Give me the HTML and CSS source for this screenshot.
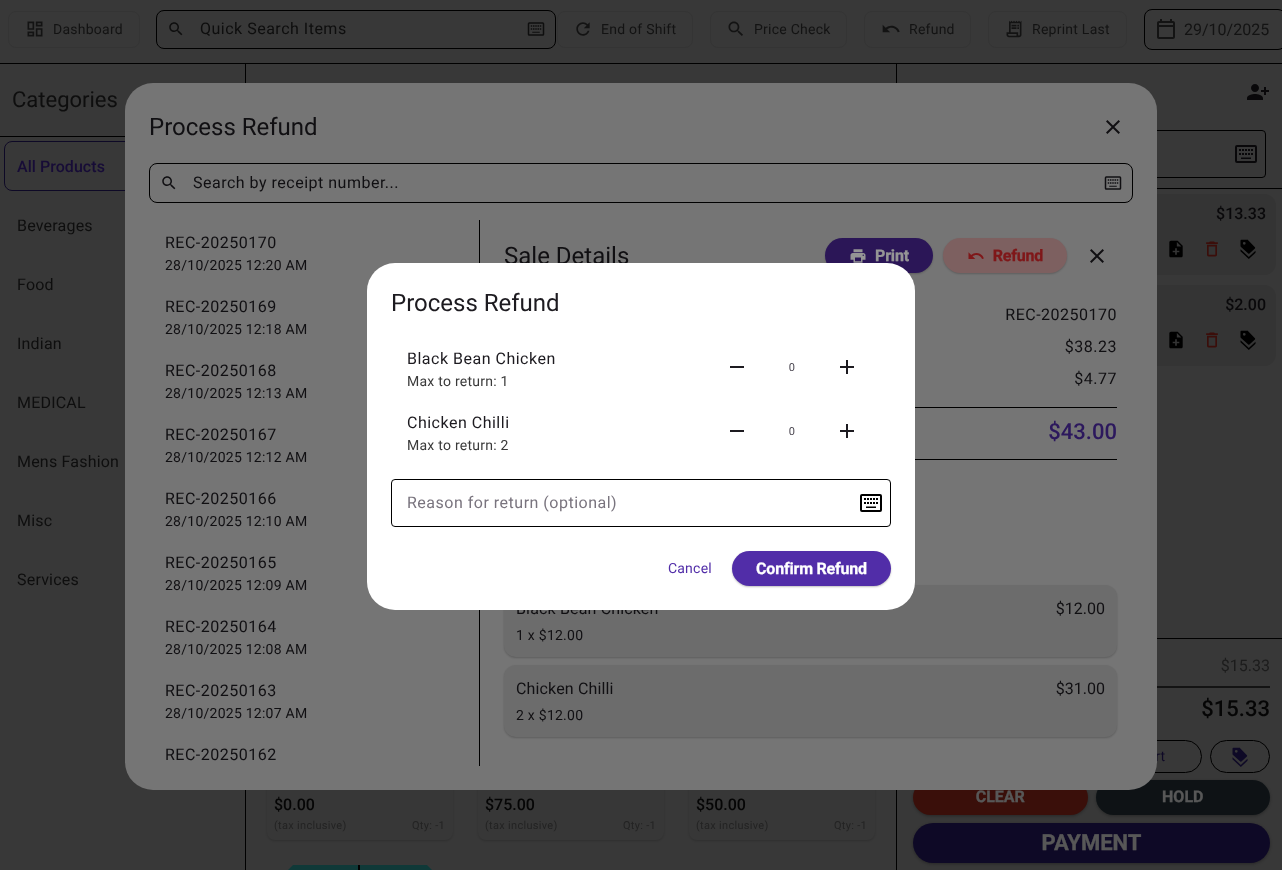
FILE: index.html
```html
<!DOCTYPE html>
<html lang="en">
    <head>
        <meta charset="UTF-8">
        <meta name="viewport" content="width=device-width, initial-scale=1.0">
        <title>Process Refund</title>
        <link rel="stylesheet" href="styles.css">
    </head>
    <body>
        <svg class="icon-defs" width="0" height="0">
            <symbol id="i-search" viewBox="0 0 24 24"><path d="M15.5 14h-.79l-.28-.27C15.41 12.59 16 11.11 16 9.5 16 5.91 13.09 3 9.5 3S3 5.91 3 9.5 5.91 16 9.5 16c1.61 0 3.09-.59 4.23-1.57l.27.28v.79l5 4.99L20.49 19l-4.99-5zm-6 0C7.01 14 5 11.99 5 9.5S7.01 5 9.5 5 14 7.01 14 9.5 11.99 14 9.5 14z"/></symbol>
            <symbol id="i-close" viewBox="0 0 24 24"><path d="M19 6.41 17.59 5 12 10.59 6.41 5 5 6.41 10.59 12 5 17.59 6.41 19 12 13.41 17.59 19 19 17.59 13.41 12z"/></symbol>
            <symbol id="i-keyboard" viewBox="0 0 24 24"><path fill-rule="evenodd" d="M3 3h18a2 2 0 0 1 2 2v14a2 2 0 0 1-2 2H3a2 2 0 0 1-2-2V5a2 2 0 0 1 2-2zm0 2v14h18V5z"/><path d="M5 7h2v2H5zm3 0h2v2H8zm3 0h2v2h-2zm3 0h2v2h-2zm3 0h2v2h-2zM5 11h2v2H5zm3 0h2v2H8zm3 0h2v2h-2zm3 0h2v2h-2zm3 0h2v2h-2zM7 15.500h10V17H7z"/></symbol>
            <symbol id="i-dashboard" viewBox="0 0 24 24"><path d="M19 5v2h-4V5h4M9 5v6H5V5h4m10 8v6h-4v-6h4M9 17v2H5v-2h4M21 3h-8v6h8V3zM11 3H3v10h8V3zm10 8h-8v10h8V11zm-10 4H3v6h8v-6z"/></symbol>
            <symbol id="i-refresh" viewBox="0 0 24 24"><path d="M17.65 6.35C16.2 4.9 14.21 4 12 4c-4.42 0-7.99 3.58-7.99 8s3.57 8 7.99 8c3.73 0 6.84-2.55 7.73-6h-2.08c-.82 2.33-3.04 4-5.65 4-3.31 0-6-2.69-6-6s2.69-6 6-6c1.66 0 3.14.69 4.22 1.78L13 11h7V4l-2.35 2.35z"/></symbol>
            <symbol id="i-undo" viewBox="0 0 24 24"><path d="M12.5 8c-2.65 0-5.05.99-6.9 2.6L2 7v9h9l-3.62-3.62c1.39-1.16 3.16-1.88 5.12-1.88 3.54 0 6.55 2.31 7.6 5.5l2.37-.78C21.08 11.03 17.15 8 12.5 8z"/></symbol>
            <symbol id="i-receipt" viewBox="0 0 24 24"><path d="M19.5 3.5 18 2l-1.5 1.5L15 2l-1.5 1.5L12 2l-1.5 1.5L9 2 7.5 3.5 6 2v14H3v3c0 1.66 1.34 3 3 3h12c1.66 0 3-1.34 3-3V2l-1.5 1.5zM15 20H6c-.55 0-1-.45-1-1v-1h10v2zm4-1c0 .55-.45 1-1 1s-1-.45-1-1v-3H8V5h11v14z"/><path d="M9 7h6v2H9zm7 0h2v2h-2zm-7 3h6v2H9zm7 0h2v2h-2z"/></symbol>
            <symbol id="i-calendar" viewBox="0 0 24 24"><path d="M19 4h-1V2h-2v2H8V2H6v2H5c-1.11 0-1.99.9-1.99 2L3 20c0 1.1.89 2 2 2h14c1.1 0 2-.9 2-2V6c0-1.1-.9-2-2-2zm0 16H5V10h14v10zM5 8V6h14v2H5z"/></symbol>
            <symbol id="i-person-add" viewBox="0 0 24 24"><path transform="matrix(-1 0 0 1 24 0)" d="M15 12c2.21 0 4-1.79 4-4s-1.79-4-4-4-4 1.79-4 4 1.79 4 4 4zm-9-2V7H4v3H1v2h3v3h2v-3h3v-2H6zm9 4c-2.67 0-8 1.34-8 4v2h16v-2c0-2.66-5.33-4-8-4z"/></symbol>
            <symbol id="i-note-add" viewBox="0 0 24 24"><path d="M14 2H6c-1.1 0-1.99.9-1.99 2L4 20c0 1.1.89 2 2 2h12c1.1 0 2-.9 2-2V8l-6-6zm2 14h-3v3h-2v-3H8v-2h3v-3h2v3h3v2zm-3-7V3.5L18.5 9H13z"/></symbol>
            <symbol id="i-delete" viewBox="0 0 24 24"><path d="M6 19c0 1.1.9 2 2 2h8c1.1 0 2-.9 2-2V7H6v12zM8 9h8v10H8V9zm7.5-5-1-1h-5l-1 1H5v2h14V4z"/></symbol>
            <symbol id="i-tags" viewBox="0 0 24 24"><path fill-rule="evenodd" d="M4 1c-.6 0-1 .4-1 1v6.500c0 .3.100.5.300.700l9 8.300c.4.400 1 .400 1.400 0l6.600-6.100c.4-.400.400-1 0-1.400l-9-9.300C11.100 1.100 10.800 1 10.500 1zm3.500 2.500a1.700 1.700 0 1 1 0 3.400 1.700 1.700 0 0 1 0-3.400z"/><path d="M3 12.200l10 9.300 8-7.400v2.500l-8 7.400-10-9.300z"/></symbol>
            <symbol id="i-print" viewBox="0 0 24 24"><path d="M19 8H5c-1.660 0-3 1.340-3 3v6h4v4h12v-4h4v-6c0-1.660-1.340-3-3-3zm-3 11H8v-5h8v5zm3-7c-.55 0-1-.45-1-1s.45-1 1-1 1 .45 1 1-.45 1-1 1zm-1-9H6v4h12V3z"/></symbol>
            <symbol id="i-minus" viewBox="0 0 24 24"><path d="M19 13H5v-2h14v2z"/></symbol>
            <symbol id="i-plus" viewBox="0 0 24 24"><path d="M19 13h-6v6h-2v-6H5v-2h6V5h2v6h6v2z"/></symbol>
        </svg>

        <div class="app">
            <header class="topbar">
                <button class="top-btn btn-dashboard"><svg class="icon"><use href="#i-dashboard"/></svg>Dashboard</button>
                <div class="quick-search">
                    <svg class="icon-sm"><use href="#i-search"/></svg>
                    <span class="quick-search-text">Quick Search Items</span>
                    <svg class="icon-sm"><use href="#i-keyboard"/></svg>
                </div>
                <button class="top-btn btn-shift"><svg class="icon"><use href="#i-refresh"/></svg>End of Shift</button>
                <button class="top-btn btn-price"><svg class="icon"><use href="#i-search"/></svg>Price Check</button>
                <button class="top-btn btn-refund"><svg class="icon"><use href="#i-undo"/></svg>Refund</button>
                <button class="top-btn btn-reprint"><svg class="icon"><use href="#i-receipt"/></svg>Reprint Last</button>
                <div class="date-box"><svg class="icon"><use href="#i-calendar"/></svg>29/10/2025</div>
            </header>

            <div class="main">
                <aside class="sidebar">
                    <h2 class="sidebar-title">Categories</h2>
                    <div class="cat cat-active">All Products</div>
                    <div class="cat">Beverages</div>
                    <div class="cat">Food</div>
                    <div class="cat">Indian</div>
                    <div class="cat">MEDICAL</div>
                    <div class="cat">Mens Fashion</div>
                    <div class="cat">Misc</div>
                    <div class="cat">Services</div>
                </aside>

                <section class="products">
                    <div class="product-grid">
                        <div class="product">
                            <div class="product-price">$0.00</div>
                            <div class="product-meta"><span>(tax inclusive)</span><span>Qty: -1</span></div>
                        </div>
                        <div class="product">
                            <div class="product-price">$75.00</div>
                            <div class="product-meta"><span>(tax inclusive)</span><span>Qty: -1</span></div>
                        </div>
                        <div class="product">
                            <div class="product-price">$50.00</div>
                            <div class="product-meta"><span>(tax inclusive)</span><span>Qty: -1</span></div>
                        </div>
                    </div>
                    <div class="product-thumb"></div>
                </section>

                <aside class="cart">
                    <div class="cart-head"><svg class="icon"><use href="#i-person-add"/></svg></div>
                    <div class="cart-customer"><div class="cart-field"><svg class="icon"><use href="#i-keyboard"/></svg></div></div>
                    <div class="cart-lines">
                        <div class="cart-line">
                            <div class="cart-line-price">$13.33</div>
                            <div class="cart-line-icons">
                                <svg class="icon"><use href="#i-note-add"/></svg>
                                <svg class="icon icon-red"><use href="#i-delete"/></svg>
                                <svg class="icon"><use href="#i-tags"/></svg>
                            </div>
                        </div>
                        <div class="cart-line">
                            <div class="cart-line-price">$2.00</div>
                            <div class="cart-line-icons">
                                <svg class="icon"><use href="#i-note-add"/></svg>
                                <svg class="icon icon-red"><use href="#i-delete"/></svg>
                                <svg class="icon"><use href="#i-tags"/></svg>
                            </div>
                        </div>
                    </div>
                    <div class="cart-foot">
                        <div class="cart-sub">$15.33</div>
                        <div class="cart-total">$15.33</div>
                        <div class="cart-row cart-row-outline">
                            <div class="pill-outline pill-wide"><span>rt</span></div>
                            <div class="pill-outline pill-tag"><svg class="icon-tag"><use href="#i-tags"/></svg></div>
                        </div>
                        <div class="cart-row cart-row-actions">
                            <button class="act act-clear">CLEAR</button>
                            <button class="act act-hold">HOLD</button>
                        </div>
                        <button class="act-pay">PAYMENT</button>
                    </div>
                </aside>
            </div>
        </div>

        <!-- first dialog -->
        <div class="scrim">
            <div class="dialog dialog-sales">
                <div class="dialog-head">
                    <h2 class="dialog-title">Process Refund</h2>
                    <svg class="icon icon-close"><use href="#i-close"/></svg>
                </div>
                <div class="receipt-search">
                    <svg class="icon-sm"><use href="#i-search"/></svg>
                    <span class="receipt-search-text">Search by receipt number...</span>
                    <svg class="icon-sm"><use href="#i-keyboard"/></svg>
                </div>
                <div class="sales-body">
                    <div class="receipts">
                        <div class="receipt"><div class="receipt-no">REC-20250170</div><div class="receipt-date">28/10/2025 12:20 AM</div></div>
                        <div class="receipt"><div class="receipt-no">REC-20250169</div><div class="receipt-date">28/10/2025 12:18 AM</div></div>
                        <div class="receipt"><div class="receipt-no">REC-20250168</div><div class="receipt-date">28/10/2025 12:13 AM</div></div>
                        <div class="receipt"><div class="receipt-no">REC-20250167</div><div class="receipt-date">28/10/2025 12:12 AM</div></div>
                        <div class="receipt"><div class="receipt-no">REC-20250166</div><div class="receipt-date">28/10/2025 12:10 AM</div></div>
                        <div class="receipt"><div class="receipt-no">REC-20250165</div><div class="receipt-date">28/10/2025 12:09 AM</div></div>
                        <div class="receipt"><div class="receipt-no">REC-20250164</div><div class="receipt-date">28/10/2025 12:08 AM</div></div>
                        <div class="receipt"><div class="receipt-no">REC-20250163</div><div class="receipt-date">28/10/2025 12:07 AM</div></div>
                        <div class="receipt"><div class="receipt-no">REC-20250162</div></div>
                    </div>
                    <div class="sale">
                        <div class="sale-head">
                            <h3 class="sale-title">Sale Details</h3>
                            <button class="sale-btn sale-print"><svg class="icon-sm"><use href="#i-print"/></svg>Print</button>
                            <button class="sale-btn sale-refund"><svg class="icon-sm"><use href="#i-undo"/></svg>Refund</button>
                            <svg class="icon sale-close"><use href="#i-close"/></svg>
                        </div>
                        <div class="sale-values">
                            <div>REC-20250170</div>
                            <div>$38.23</div>
                            <div>$4.77</div>
                        </div>
                        <div class="sale-total">$43.00</div>
                        <div class="sale-item">
                            <div class="sale-item-top"><span>Black Bean Chicken</span><span class="sale-item-price">$12.00</span></div>
                            <div class="sale-item-sub">1 x $12.00</div>
                        </div>
                        <div class="sale-item">
                            <div class="sale-item-top"><span>Chicken Chilli</span><span class="sale-item-price">$31.00</span></div>
                            <div class="sale-item-sub">2 x $12.00</div>
                        </div>
                    </div>
                </div>
            </div>
        </div>

        <!-- second dialog, on top -->
        <div class="scrim">
            <div class="dialog dialog-confirm">
                <h2 class="dialog-title confirm-title">Process Refund</h2>
                <div class="return-row">
                    <div class="return-text">
                        <div class="return-name">Black Bean Chicken</div>
                        <div class="return-max">Max to return: 1</div>
                    </div>
                    <div class="stepper">
                        <svg class="icon"><use href="#i-minus"/></svg>
                        <span class="stepper-val">0</span>
                        <svg class="icon"><use href="#i-plus"/></svg>
                    </div>
                </div>
                <div class="return-row">
                    <div class="return-text">
                        <div class="return-name">Chicken Chilli</div>
                        <div class="return-max">Max to return: 2</div>
                    </div>
                    <div class="stepper">
                        <svg class="icon"><use href="#i-minus"/></svg>
                        <span class="stepper-val">0</span>
                        <svg class="icon"><use href="#i-plus"/></svg>
                    </div>
                </div>
                <div class="reason">
                    <span class="reason-text">Reason for return (optional)</span>
                    <svg class="icon"><use href="#i-keyboard"/></svg>
                </div>
                <div class="confirm-actions">
                    <button class="btn-cancel">Cancel</button>
                    <button class="btn-confirm">Confirm Refund</button>
                </div>
            </div>
        </div>
    </body>
</html>
```

FILE: styles.css
```css
*{
    margin: 0;
    padding: 0;
    box-sizing: border-box;
}
body{
    width: 1282px;
    height: 870px;
    overflow: hidden;
    font-family: Roboto, "Liberation Sans", sans-serif;
    text-rendering: geometricPrecision;
    color: #1d1b20;
    background-color: #a4a4a4;
}
button{
    font-family: inherit;
    text-rendering: inherit;
    border: none;
    background: none;
}
svg{
    fill: currentColor;
    flex-shrink: 0;
}
.icon-defs{
    position: absolute;
}
.icon{
    width: 24px;
    height: 24px;
}
.icon-sm{
    width: 18px;
    height: 18px;
}
.icon-red{
    color: #ad2a20;
}

/* page under the dialogs */
.app{
    width: 1282px;
    height: 870px;
    display: flex;
    flex-direction: column;
    will-change: transform;
}
.topbar{
    height: 64px;
    flex-shrink: 0;
    border-bottom: 1px solid #000;
    display: flex;
    align-items: center;
    padding: 0 0 5px 8px;
    overflow: hidden;
}
.top-btn{
    height: 37px;
    display: flex;
    align-items: center;
    gap: 8px;
    border: 1px solid #999;
    border-radius: 8px;
    font-size: 14px;
    letter-spacing: .25px;
    color: #3a3a3a;
    padding: 2px 0 0 16px;
    flex-shrink: 0;
}
.top-btn .icon{
    width: 20px;
    height: 20px;
    margin-top: -2px;
}
.btn-dashboard{
    width: 132px;
    margin-right: 16px;
}
.quick-search{
    width: 400px;
    height: 39px;
    border: 1px solid #000;
    border-radius: 8px;
    display: flex;
    align-items: center;
    padding: 0 10px;
    margin-right: 1px;
    flex-shrink: 0;
    color: #2a2a2a;
}
.quick-search-text{
    flex: 1;
    font-size: 16px;
    letter-spacing: .5px;
    margin-left: 15px;
    padding-bottom: 2px;
}
.btn-shift{
    width: 136px;
    margin-right: 17px;
    padding-left: 15px;
}
.btn-price{
    width: 137px;
    margin-right: 17px;
    padding-left: 15px;
}
.btn-refund{
    width: 107px;
    margin-right: 17px;
}
.btn-reprint{
    width: 139px;
    margin-right: 17px;
    padding-left: 15px;
}
.date-box{
    width: 142px;
    height: 41px;
    border: 1px solid #000;
    border-radius: 8px;
    display: flex;
    align-items: center;
    gap: 6px;
    padding-left: 9px;
    font-size: 16px;
    color: #3a3a3a;
    flex-shrink: 0;
}
.main{
    flex: 1;
    display: flex;
    min-height: 0;
}
.sidebar{
    width: 246px;
    border-right: 1px solid #000;
    color: #2c2c2c;
}
.sidebar-title{
    height: 73px;
    border-bottom: 1px solid #000;
    font-size: 22px;
    font-weight: 400;
    line-height: 73px;
    padding-left: 12px;
    margin-bottom: 4px;
}
.cat{
    height: 50px;
    margin: 0 4px 9px;
    padding-left: 13px;
    font-size: 16px;
    letter-spacing: .2px;
    line-height: 52px;
}
.cat-active{
    border: 1.500px solid #2c1d6f;
    border-radius: 8px;
    font-weight: 500;
    letter-spacing: .05px;
    color: #4527a0;
    padding-left: 12px;
    line-height: 49px;
}
.products{
    flex: 1;
    display: flex;
    flex-direction: column;
    justify-content: flex-end;
    padding-left: 21px;
    overflow: hidden;
}
.product-grid{
    display: grid;
    grid-template-columns: repeat(3, 186px);
    column-gap: 25px;
}
.product{
    height: 120px;
    background-color: #a1a1a1;
    border-radius: 8px;
    padding: 0 8px;
    display: flex;
    flex-direction: column;
    justify-content: flex-end;
    box-shadow: 0 1px 2px rgba(0,0,0,.15);
}
.product-price{
    font-size: 16px;
    font-weight: 500;
    color: #111;
    line-height: 20px;
    padding-bottom: 3px;
    margin-left: -1px;
}
.product-meta{
    display: flex;
    justify-content: space-between;
    font-size: 11px;
    letter-spacing: .3px;
    color: #666;
    line-height: 16px;
    padding-bottom: 6px;
    margin-left: -1px;
}
.product-thumb{
    width: 144px;
    height: 5px;
    margin: 25px 0 0 21px;
    flex-shrink: 0;
    background: linear-gradient(to right, #2fa8a4 48.500%, #000 48.500%, #000 50%, #2fa8a4 50%);
    clip-path: polygon(5px 0, calc(100% - 5px) 0, 100% 5px, 0 5px);
}
.cart{
    width: 386px;
    border-left: 1px solid #000;
    display: flex;
    flex-direction: column;
}
.cart-head{
    height: 66px;
    display: flex;
    justify-content: flex-end;
    padding: 16px 12px 0 0;
}
.cart-customer{
    height: 59px;
    border-bottom: 1px solid #000;
    display: flex;
    justify-content: flex-end;
    padding-right: 16px;
}
.cart-field{
    width: 200px;
    height: 48px;
    border: 1px solid #000;
    border-radius: 4px;
    display: flex;
    align-items: center;
    justify-content: flex-end;
    padding-right: 7px;
}
.cart-lines{
    flex: 1;
    padding: 5px 6px 0 0;
}
.cart-line{
    height: 81px;
    margin: 0 0 10px 6px;
    background-color: #989898;
    border-radius: 12px;
    padding: 8px 10px 0 0;
}
.cart-line-price{
    text-align: right;
    font-size: 16px;
    font-weight: 500;
    line-height: 24px;
}
.cart-line-icons{
    display: flex;
    justify-content: flex-end;
    gap: 12px;
    margin: 11px 6px 0 0;
}
.cart-line-icons .icon{
    width: 20px;
    height: 20px;
    margin: 2px;
}
.cart-line-icons .icon:not(.icon-red){
    color: #000;
}
.cart-foot{
    height: 232px;
    flex-shrink: 0;
    border-top: 1px solid #000;
    padding: 15px 12px 0 16px;
}
.cart-sub{
    text-align: right;
    font-size: 16px;
    color: #555;
    line-height: 24px;
    padding-bottom: 8px;
    border-bottom: 2px solid #3a3a3a;
}
.cart-total{
    text-align: right;
    font-size: 22px;
    font-weight: 500;
    color: #111;
    line-height: 32px;
    margin: 6px 0 14px;
}
.cart-row{
    display: flex;
}
.cart-row-outline{
    justify-content: flex-end;
    gap: 8px;
    margin-bottom: 7px;
}
.pill-outline{
    height: 33px;
    border: 1px solid #000;
    border-radius: 17px;
    display: flex;
    align-items: center;
    justify-content: center;
    color: #2c1d6f;
}
.pill-wide{
    width: 180px;
    font-size: 14px;
    justify-content: flex-end;
    padding-right: 36px;
}
.pill-tag{
    width: 60px;
}
.icon-tag{
    width: 20px;
    height: 20px;
}
.cart-row-actions{
    gap: 8px;
    margin-bottom: 8px;
}
.act{
    flex: 1;
    height: 35px;
    border-radius: 18px;
    padding-bottom: 2px;
    font-size: 16px;
    font-weight: 700;
    color: #fff;
    -webkit-text-stroke: .25px currentColor;
    box-shadow: 0 1px 3px rgba(0,0,0,.3);
}
.act-clear{
    background-color: #aa2f20;
}
.act-hold{
    background-color: #293840;
}
.act-pay{
    width: 100%;
    height: 40px;
    border-radius: 20px;
    font-size: 22px;
    font-weight: 700;
    color: #fff;
    -webkit-text-stroke: .25px currentColor;
    background-color: #2c1d6f;
    box-shadow: 0 1px 3px rgba(0,0,0,.3);
}

/* dialogs */
.scrim{
    position: fixed;
    inset: 0;
    background-color: rgba(0,0,0,.415);
    display: flex;
    justify-content: center;
    align-items: flex-start;
    will-change: transform;
}
.dialog{
    border-radius: 28px;
    padding: 24px;
}
.dialog-title{
    font-size: 24px;
    font-weight: 400;
    line-height: 40px;
}
.dialog-sales{
    width: 1032px;
    height: 707px;
    margin-top: 83px;
    background-color: #c8c8c8;
    display: flex;
    flex-direction: column;
}
.dialog-head{
    height: 40px;
    display: flex;
    align-items: center;
    justify-content: space-between;
    padding-right: 8px;
}
.receipt-search{
    height: 40px;
    margin-top: 16px;
    border: 1px solid #000;
    border-radius: 8px;
    display: flex;
    align-items: center;
    padding: 0 10px;
    flex-shrink: 0;
}
.receipt-search-text{
    flex: 1;
    margin-left: 15px;
    font-size: 16px;
    letter-spacing: .5px;
    padding-bottom: 2px;
}
.sales-body{
    flex: 1;
    display: flex;
    margin-top: 17px;
    min-height: 0;
}
.receipts{
    width: 331px;
    border-right: 1px solid #000;
    overflow: hidden;
    flex-shrink: 0;
}
.receipt{
    height: 64px;
    padding: 11px 0 0 16px;
}
.receipt-no{
    font-size: 16px;
    letter-spacing: .5px;
    line-height: 24px;
}
.receipt-date{
    font-size: 14px;
    letter-spacing: .25px;
    line-height: 20px;
    margin-top: 1px;
}
.sale{
    flex: 1;
    padding: 18px 16px 0 24px;
}
.sale-head{
    display: flex;
    align-items: center;
    height: 35px;
}
.sale-title{
    flex: 1;
    font-size: 24px;
    font-weight: 400;
}
.sale-btn{
    height: 35px;
    border-radius: 18px;
    display: flex;
    align-items: center;
    justify-content: center;
    gap: 8px;
    font-size: 16px;
    font-weight: 700;
    letter-spacing: -.2px;
    -webkit-text-stroke: .25px currentColor;
    box-shadow: 0 1px 2px rgba(0,0,0,.2);
}
.sale-print{
    width: 108px;
    background-color: #4a2696;
    color: #fff;
    margin-right: 10px;
}
.sale-refund{
    width: 124px;
    background-color: #d6a4a4;
    color: #d9282b;
    margin-right: 18px;
}
.sale-close{
    margin-right: 8px;
}
.sale-values{
    margin-top: 26px;
    text-align: right;
    font-size: 16px;
    letter-spacing: .5px;
    line-height: 32px;
    padding-bottom: 12px;
    border-bottom: 1px solid #000;
}
.sale-total{
    height: 52px;
    border-bottom: 1px solid #000;
    text-align: right;
    font-size: 22px;
    font-weight: 500;
    color: #4c2aa0;
    line-height: 50px;
    margin-bottom: 125px;
}
.sale-item{
    height: 72px;
    margin-bottom: 8px;
    background-color: #b9b9b9;
    border-radius: 12px;
    padding: 12px 12px 0;
    box-shadow: 0 1px 2px rgba(0,0,0,.2);
}
.sale-item-top{
    display: flex;
    justify-content: space-between;
    font-size: 16px;
    letter-spacing: .15px;
    line-height: 24px;
}
.sale-item-price{
    letter-spacing: .03px;
}
.sale-item-sub{
    font-size: 14px;
    letter-spacing: .25px;
    line-height: 20px;
    margin-top: 5px;
}
.dialog-confirm{
    width: 548px;
    height: 347px;
    margin-top: 263px;
    background-color: #fff;
}
.confirm-title{
    line-height: 30px;
    height: 30px;
    padding-top: 1px;
    margin-bottom: 21px;
}
.return-row{
    height: 64px;
    padding: 9px 32px 0 16px;
    display: flex;
    justify-content: space-between;
}
.return-name{
    font-size: 16px;
    letter-spacing: .5px;
    line-height: 24px;
}
.return-max{
    font-size: 14px;
    letter-spacing: .25px;
    line-height: 20px;
    margin-top: 1px;
    color: #3a3a3a;
}
.stepper{
    width: 134px;
    height: 24px;
    margin-top: 8px;
    display: flex;
    align-items: center;
    justify-content: space-between;
}
.stepper-val{
    font-size: 11px;
    letter-spacing: .5px;
    color: #49454f;
}
.reason{
    height: 48px;
    margin-top: 13px;
    border: 1px solid #000;
    border-radius: 4px;
    display: flex;
    align-items: center;
    justify-content: space-between;
    padding: 0 7px 0 15px;
    font-size: 16px;
    letter-spacing: .5px;
    color: #79747e;
}
.reason-text{
    padding-bottom: 2px;
}
.reason .icon{
    color: #000;
}
.confirm-actions{
    display: flex;
    justify-content: flex-end;
    align-items: center;
    margin-top: 24px;
}
.btn-cancel{
    font-size: 14px;
    letter-spacing: .25px;
    color: #512da8;
    margin-right: 20px;
}
.btn-confirm{
    width: 159px;
    height: 35px;
    border-radius: 18px;
    background-color: #512da8;
    color: #fff;
    font-size: 16px;
    font-weight: 700;
    letter-spacing: -.2px;
    -webkit-text-stroke: .25px currentColor;
    box-shadow: 0 1px 2px rgba(0,0,0,.25);
}
```
